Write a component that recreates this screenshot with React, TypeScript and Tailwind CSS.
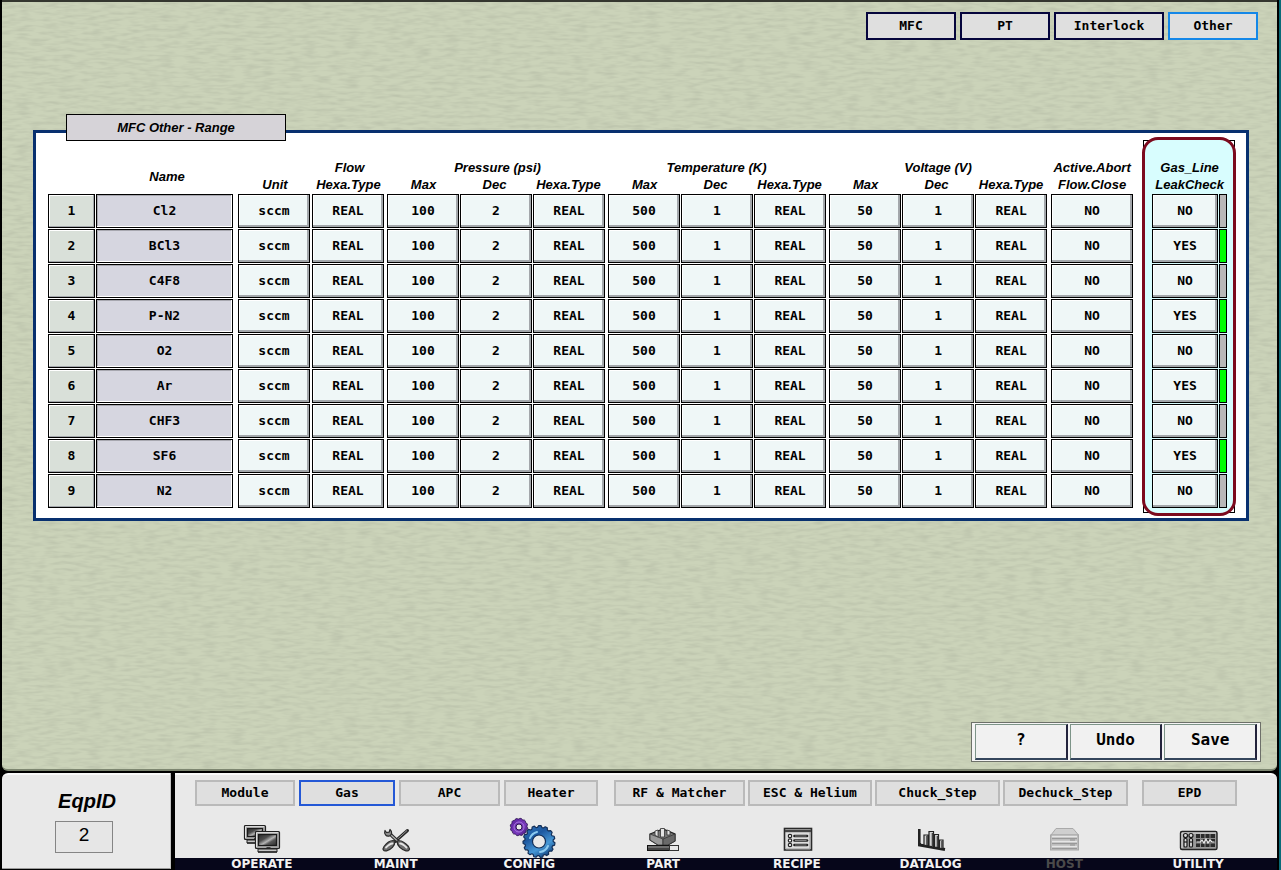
import React from "react";
import type { ReactNode } from "react";

const MONO = "font-['DejaVu_Sans_Mono','Liberation_Mono',monospace] text-[13px] font-bold leading-4";
const HEAD = "p-0 font-['Liberation_Sans',Arial,sans-serif] text-[13px] font-bold italic leading-[17px]";

const CELL =
  "block h-[34px] w-full border border-black bg-[#eff7f7] text-center shadow-[inset_-2px_-2px_0_#a3a7ab,inset_1px_1px_0_#ffffff]";

const gases = ["Cl2", "BCl3", "C4F8", "P-N2", "O2", "Ar", "CHF3", "SF6", "N2"];
const leakCheck = [false, true, false, true, false, true, false, true, false];

const fields = [
  { label: "Unit", value: "sccm", pad: "pr-0.5" },
  { label: "Flow Hexa.Type", value: "REAL", pad: "pr-[3px]" },
  { label: "Pressure Max", value: "100", pad: "pr-px" },
  { label: "Pressure Dec", value: "2", pad: "pr-px" },
  { label: "Pressure Hexa.Type", value: "REAL", pad: "pr-[3px]" },
  { label: "Temperature Max", value: "500", pad: "pr-px" },
  { label: "Temperature Dec", value: "1", pad: "pr-px" },
  { label: "Temperature Hexa.Type", value: "REAL", pad: "pr-[3px]" },
  { label: "Voltage Max", value: "50", pad: "pr-px" },
  { label: "Voltage Dec", value: "1", pad: "pr-px" },
  { label: "Voltage Hexa.Type", value: "REAL", pad: "pr-1" },
  { label: "Active.Abort Flow.Close", value: "NO", pad: "pr-0" },
];

function Texture() {
  return (
    <svg className="pointer-events-none absolute inset-0 h-full w-full" aria-hidden="true">
      <filter id="weave" x="0" y="0" width="100%" height="100%">
        <feTurbulence type="fractalNoise" baseFrequency="0.07 0.3" numOctaves={2} seed={11} />
        <feColorMatrix values="0 0 0 0 0.46  0 0 0 0 0.5  0 0 0 0 0.38  1.3 0 0 0 -0.5" />
      </filter>
      <rect width="100%" height="100%" filter="url(#weave)" />
    </svg>
  );
}

function SubPages() {
  const pages = [
    { name: "MFC", width: "w-[90px]" },
    { name: "PT", width: "w-[90px]" },
    { name: "Interlock", width: "w-[110px]" },
    { name: "Other", width: "w-[90px]" },
  ];
  return (
    <nav className="flex justify-end gap-1 pr-[19px]">
      {pages.map((p) => (
        <button
          key={p.name}
          type="button"
          className={`${MONO} ${p.width} h-7 border-2 bg-[#dfdfdf] ${p.name === "Other" ? "border-[#1487e8]" : "border-[#05053c]"}`}
        >
          {p.name}
        </button>
      ))}
    </nav>
  );
}

function RangeTable() {
  return (
    <table className="mt-[22px] w-0 flex-1 table-fixed border-separate border-spacing-0 self-start">
      <colgroup>
        <col className="w-[48px]" />
        <col className="w-[142px]" />
        <col className="w-[74px]" />
        <col className="w-[75px]" />
        <col className="w-[73px]" />
        <col className="w-[73px]" />
        <col className="w-[75px]" />
        <col className="w-[73px]" />
        <col className="w-[73px]" />
        <col className="w-[75px]" />
        <col className="w-[73px]" />
        <col className="w-[73px]" />
        <col className="w-[76px]" />
        <col className="w-[82px]" />
      </colgroup>
      <thead>
        <tr className="h-[17px]">
          <td rowSpan={2} className="p-0" />
          <th rowSpan={2} className={`${HEAD} align-middle`}>Name</th>
          <td className="p-0" />
          <th className={HEAD}>Flow</th>
          <th colSpan={3} className={HEAD}>Pressure (psi)</th>
          <th colSpan={3} className={`${HEAD} pr-1`}>Temperature (K)</th>
          <th colSpan={3} className={`${HEAD} pr-1`}>Voltage (V)</th>
          <th rowSpan={2} className={`${HEAD} align-top`}>
            Active.Abort
            <br />
            Flow.Close
          </th>
        </tr>
        <tr className="h-[18px] align-top">
          <th className={HEAD}>Unit</th>
          <th className={`${HEAD} pr-0.5`}>Hexa.Type</th>
          {["p", "t", "v"].map((g) => (
            <React.Fragment key={g}>
              <th className={HEAD}>Max</th>
              <th className={`${HEAD} pr-1`}>Dec</th>
              <th className={`${HEAD} pr-1`}>Hexa.Type</th>
            </React.Fragment>
          ))}
        </tr>
      </thead>
      <tbody className={MONO}>
        {gases.map((gas, i) => (
          <tr key={gas} className="h-[35px] align-top">
            <td className="p-0 pr-px">
              <div className="flex h-[34px] items-center justify-center border border-black bg-[#d9e0d9] shadow-[inset_-1px_-1px_0_#a3a7ab,inset_1px_1px_0_#ffffff]">
                {i + 1}
              </div>
            </td>
            <th scope="row" className="p-0 pr-[5px]">
              <div className="flex h-[34px] items-center justify-center border border-black bg-[#d6d6e0] shadow-[inset_-1px_-1px_0_#ffffff,inset_1px_1px_0_#a8a8b0]">
                {gas}
              </div>
            </th>
            {fields.map((f) => (
              <td key={f.label} className={`p-0 ${f.pad}`}>
                <button type="button" aria-label={`${gas} ${f.label}: ${f.value}`} className={CELL}>
                  {f.value}
                </button>
              </td>
            ))}
          </tr>
        ))}
      </tbody>
    </table>
  );
}

function LeakCheckPanel() {
  return (
    <div className="relative w-[94px] shrink-0">
      <div className="absolute inset-x-px top-[3px] bottom-[3px] border border-black" />
      <div className="relative rounded-[16px] border-[3px] border-[#7c0a1e] bg-[#d8fdfe] pt-[19px] pr-1.5 pb-1 pl-[7px]">
        <table className="w-full table-fixed border-separate border-spacing-0">
          <colgroup>
            <col className="w-[67px]" />
            <col className="w-2" />
          </colgroup>
          <thead>
            <tr className="h-[35px] align-top">
              <th colSpan={2} className={HEAD}>
                Gas_Line
                <br />
                LeakCheck
              </th>
            </tr>
          </thead>
          <tbody className={MONO}>
            {leakCheck.map((on, i) => (
              <tr key={gases[i]} className="h-[35px] align-top">
                <td className="p-0 pr-px">
                  <button type="button" aria-label={`${gases[i]} leak check: ${on ? "YES" : "NO"}`} className={CELL}>
                    {on ? "YES" : "NO"}
                  </button>
                </td>
                <td className="p-0">
                  <div className={`h-[34px] border border-black ${on ? "bg-[#00fc00]" : "bg-[#b8b8b8]"}`} />
                </td>
              </tr>
            ))}
          </tbody>
        </table>
      </div>
    </div>
  );
}

function Actions() {
  return (
    <div className="mr-4 mb-[7px] flex w-[290px] gap-0.5 self-end border border-[#6d7069] bg-[#f4f4f4] py-px pr-[3px] pl-[3px]">
      {["?", "Undo", "Save"].map((a) => (
        <button
          key={a}
          type="button"
          className="h-9 flex-1 border border-r-2 border-b-2 border-t-[#7d9488] border-r-[#23233c] border-b-[#34455c] border-l-[#7d9488] bg-[#f1f1f1] pb-1 font-['DejaVu_Sans_Mono',monospace] text-[16px] leading-6 font-bold"
        >
          {a}
        </button>
      ))}
    </div>
  );
}

function gearPath(cx: number, cy: number, outer: number, inner: number, teeth: number) {
  const pts: string[] = [];
  for (let i = 0; i < teeth; i++) {
    [0, 0.2, 0.55, 0.75].forEach((f, k) => {
      const a = ((i + f) / teeth) * Math.PI * 2;
      const r = k === 1 || k === 2 ? outer : inner;
      pts.push(`${(cx + r * Math.cos(a)).toFixed(2)} ${(cy + r * Math.sin(a)).toFixed(2)}`);
    });
  }
  return `M${pts.join("L")}Z`;
}

function Icon({ children }: { children: ReactNode }) {
  return (
    <svg viewBox="0 0 48 40" className="h-10 w-12 overflow-visible" aria-hidden="true">
      {children}
    </svg>
  );
}

function Monitor({ x, y, w, h }: { x: number; y: number; w: number; h: number }) {
  return (
    <g transform={`translate(${x} ${y})`}>
      <path d={`M3 ${h - 3}H${w - 3}V${h}H3Z`} fill="#c4c4c4" stroke="#222" strokeWidth="1" />
      <rect x="0.5" y="0.5" width={w - 1} height={h - 4} rx="1" fill="#a6a6a6" stroke="#222" strokeWidth="1.2" />
      <path d={`M1.5 ${h - 5}V1.7H${w - 2}`} fill="none" stroke="#f3f3f3" strokeWidth="0.8" />
      <rect x="3.5" y="3.5" width={w - 7} height={h - 10} fill="url(#screen)" stroke="#1a1a1a" strokeWidth="1.2" />
      <path d={`M${w / 2 - 1} ${h - 4}h4`} stroke="#222" strokeWidth="1.6" />
      <path d={`M3 ${h}H${w - 3}`} stroke="#222" strokeWidth="1.4" />
    </g>
  );
}

function OperateIcon() {
  return (
    <Icon>
      <defs>
        <linearGradient id="screen" x1="0" y1="0" x2="1" y2="1">
          <stop offset="0" stopColor="#2b2b2b" />
          <stop offset="0.35" stopColor="#4d4d4d" />
          <stop offset="0.55" stopColor="#b4b4b4" />
          <stop offset="0.68" stopColor="#585858" />
          <stop offset="1" stopColor="#2b2b2b" />
        </linearGradient>
      </defs>
      <Monitor x={6} y={7} w={22} h={18} />
      <Monitor x={17} y={13} w={25} h={21} />
    </Icon>
  );
}

function MaintIcon() {
  return (
    <Icon>
      <path d="M35.5 12.500 23 23.500" stroke="#2a2a2a" strokeWidth="3" strokeLinecap="round" />
      <path d="M35 12.500 24 22.500" stroke="#aaa" strokeWidth="0.8" />
      <path d="M17 15 27 24.500" stroke="#2a2a2a" strokeWidth="3.4" />
      <path d="M18 16 27 24.500" stroke="#b5b5b5" strokeWidth="1.1" />
      <path d="M13 12.500c-1.300 3.500 1.200 6.500 4.500 5.500 2.500-1 3-4.500.5-6.500l-.8 2.700-2.700.3Z" fill="#8d8d8d" stroke="#2a2a2a" strokeWidth="1.2" strokeLinejoin="round" />
      <path d="M23 23c-3.500-1-8 1.500-11 5.500-2 3-.5 5 2.500 4.300 4.500-1 8.500-4.800 8.500-9.800Z" fill="#6e6e6e" stroke="#2a2a2a" strokeWidth="1.2" />
      <path d="M25 23c3.500-1 8 1.500 11.500 5.500 2 3 .5 5-2.500 4.300-4.500-1-9-4.800-9-9.800Z" fill="#6e6e6e" stroke="#2a2a2a" strokeWidth="1.2" />
      <path d="M20.500 25.500c-2.500 0-4.500 2-6.500 4M28 25.500c2.500 0 4.500 2 6.500 4" fill="none" stroke="#e4e4e4" strokeWidth="1.8" strokeLinecap="round" />
    </Icon>
  );
}

function ConfigIcon() {
  return (
    <Icon>
      <defs>
        <linearGradient id="blue" x1="0" y1="0" x2="0.6" y2="1">
          <stop offset="0" stopColor="#2f78bd" />
          <stop offset="0.4" stopColor="#1d58a0" />
          <stop offset="0.75" stopColor="#4698d6" />
          <stop offset="1" stopColor="#184d8b" />
        </linearGradient>
        <linearGradient id="violet" x1="0" y1="0" x2="1" y2="1">
          <stop offset="0" stopColor="#5a1f9e" />
          <stop offset="0.6" stopColor="#7a3abd" />
          <stop offset="1" stopColor="#3d1173" />
        </linearGradient>
      </defs>
      <path d={gearPath(14, 9, 8.8, 8, 12)} fill="url(#violet)" stroke="#2c1450" strokeWidth="0.8" strokeLinejoin="round" />
      <circle cx="14" cy="9" r="5" fill="none" stroke="#a878de" strokeWidth="1" />
      <circle cx="14" cy="9" r="3" fill="#e9e9e9" stroke="#2c1450" />
      <path d={gearPath(34, 23.500, 16, 14.200, 15)} fill="url(#blue)" stroke="#132f58" strokeWidth="1.2" strokeLinejoin="round" />
      <path d="M25 20a10 10 0 0 1 7-6M43 28a10 10 0 0 1-8 6" fill="none" stroke="#8ccaf0" strokeWidth="2" strokeLinecap="round" />
      <circle cx="34" cy="23.500" r="6.500" fill="#e9e9e9" stroke="#132f58" strokeWidth="1.2" />
    </Icon>
  );
}

function PartIcon() {
  return (
    <Icon>
      <path d="M11 16 24 11 36 16V23L29 27H19L11 22Z" fill="#777" stroke="#222" strokeWidth="1.2" />
      <path d="M11 16 24 21V27H19L11 22Z" fill="#999" stroke="#333" strokeWidth="0.8" />
      <path d="M24 21 36 16V23L29 27H24Z" fill="#696969" stroke="#333" strokeWidth="0.8" />
      <path d="M16 17v-4l3-1v7ZM21.500 19v-8.500h4V19ZM28 17v-5l3 1v4Z" fill="#e4e4e4" stroke="#333" strokeWidth="0.8" />
      <rect x="8.5" y="27.500" width="22" height="5" fill="#444" stroke="#111" />
      <path d="M9 29H30" stroke="#999" />
      <rect x="30.5" y="27.500" width="9" height="5" fill="#e8e8e8" stroke="#333" />
    </Icon>
  );
}

function RecipeIcon() {
  return (
    <Icon>
      <rect x="11.5" y="10.500" width="27" height="21.500" fill="#dcdcdc" stroke="#2a2a2a" strokeWidth="1.6" />
      <path d="M12 13H38" stroke="#444" strokeWidth="2.4" />
      <path d="M13 31H37V14" fill="none" stroke="#999" />
      {[18, 22.5, 27].map((y) => (
        <g key={y}>
          <circle cx="17" cy={y} r="1.700" fill="#fff" stroke="#222" strokeWidth="1.2" />
          <path d={`M21.500 ${y}H34`} stroke="#222" strokeWidth="2.6" strokeLinecap="round" />
          <path d={`M22 ${y}H33.500`} stroke="#aaa" strokeWidth="0.7" />
        </g>
      ))}
    </Icon>
  );
}

function DatalogIcon() {
  return (
    <Icon>
      <path d="M12.500 11V27L38 31.500" fill="none" stroke="#222" strokeWidth="3" />
      <path d="M13.500 11V25" stroke="#888" strokeWidth="0.8" />
      <path d="M17 27V17h4v11ZM22 28V13.500h4.500v15.500ZM27.500 29V16.500h4v13ZM32.500 30v-8h3.500v9Z" fill="#d4d4d4" stroke="#222" strokeWidth="1.2" />
      <path d="M20 18v9M25.500 15v13M30.500 18v11M35 23v7" stroke="#444" strokeWidth="1.6" />
    </Icon>
  );
}

function HostIcon() {
  return (
    <Icon>
      <path d="M11 17 16 10.500H33L38.500 17Z" fill="#cfcfcf" stroke="#aaa" />
      <rect x="10.500" y="17" width="28" height="15" fill="#bdbdbd" stroke="#a8a8a8" />
      <path d="M12 18.500H37M12 23.500H37M12 28.500H37" stroke="#e6e6e6" strokeWidth="1.6" />
      <path d="M12 20.500H37M12 25.500H37M12 30.500H37" stroke="#999" strokeWidth="1" />
      <path d="M30 22h5M30 27h5" stroke="#8f8f8f" />
    </Icon>
  );
}

function UtilityIcon() {
  return (
    <Icon>
      <rect x="6.5" y="13.500" width="36.500" height="18" rx="1.5" fill="#999" stroke="#222" strokeWidth="1.4" />
      <path d="M8 30V15H42" fill="none" stroke="#e4e4e4" />
      {[11.5, 17].map((x) => (
        <g key={x} stroke="#1a1a1a" strokeWidth="1.2">
          <rect x={x - 1.5} y="20.500" width="3" height="8.500" rx="1" fill="#ddd" />
          <circle cx={x} cy="17.500" r="2" fill="#ddd" />
          <path d={`M${x - 1.5} 24h3`} />
        </g>
      ))}
      <rect x="22" y="16" width="19" height="13" fill="#2b2b2b" />
      <path d="M22 20.500H41M22 25H41M26.500 16V29M31 16V29M36 16V29" stroke="#8a8a8a" strokeWidth="1" />
      <path d="M22.500 24h4l1.500-2 2 3 2-4 2 4 2-3 2 2h2.500" fill="none" stroke="#f1f1f1" strokeWidth="1.2" />
    </Icon>
  );
}

const sections = [
  { name: "Module", basis: "basis-[100px]", gap: "" },
  { name: "Gas", basis: "basis-[96px]", gap: "ml-1" },
  { name: "APC", basis: "basis-[101px]", gap: "ml-1" },
  { name: "Heater", basis: "basis-[94px]", gap: "ml-1" },
  { name: "RF & Matcher", basis: "basis-[131px]", gap: "ml-4" },
  { name: "ESC & Helium", basis: "basis-[124px]", gap: "ml-[3px]" },
  { name: "Chuck_Step", basis: "basis-[125px]", gap: "ml-[3px]" },
  { name: "Dechuck_Step", basis: "basis-[125px]", gap: "ml-[3px]" },
  { name: "EPD", basis: "basis-[95px]", gap: "ml-3.5" },
];

const modes = [
  { name: "OPERATE", icon: <OperateIcon /> },
  { name: "MAINT", icon: <MaintIcon /> },
  { name: "CONFIG", icon: <ConfigIcon /> },
  { name: "PART", icon: <PartIcon /> },
  { name: "RECIPE", icon: <RecipeIcon /> },
  { name: "DATALOG", icon: <DatalogIcon /> },
  { name: "HOST", icon: <HostIcon /> },
  { name: "UTILITY", icon: <UtilityIcon /> },
];

function Footer() {
  return (
    <footer className="flex shrink-0 gap-1">
      <div className="mb-px flex w-[169px] shrink-0 flex-col items-center rounded-tl-md border-t-2 border-r border-b border-t-[#fafafa] border-r-[#c4c4c4] border-b-[#9a9a9a] bg-[#e9e9e9] pt-3.5 pl-0.5">
        <label
          htmlFor="eqp-id"
          className="font-['Liberation_Sans',Arial,sans-serif] text-[20px] leading-6 font-bold italic"
        >
          EqpID
        </label>
        <input
          id="eqp-id"
          readOnly
          value="2"
          className="mt-2 mr-1.5 h-8 w-[58px] border border-[#858585] bg-[#e6e6e6] pb-1 text-center font-['Liberation_Sans',Arial,sans-serif] text-[19px]"
        />
      </div>
      <div className="min-w-0 flex-1 rounded-tr-md border-t-2 border-[#fafafa] bg-[linear-gradient(to_top,#06061a_12px,#e9e9e9_12px)]">
        <nav className="flex pt-[5px] pr-10 pl-5">
          {sections.map((s) => (
            <button
              key={s.name}
              type="button"
              className={`${MONO} ${s.basis} ${s.gap} h-[26px] grow whitespace-nowrap border-2 bg-[#dfdfdf] ${s.name === "Gas" ? "border-[#2458d6]" : "border-[#bababa]"}`}
            >
              {s.name}
            </button>
          ))}
        </nav>
        <nav className="grid grid-cols-8 pt-3 pr-3 pl-5">
          {modes.map((m) => (
            <a key={m.name} href={`#${m.name.toLowerCase()}`} className="flex flex-col items-center">
              {m.icon}
              <span
                className={`h-3 font-['DejaVu_Sans',sans-serif] text-[12px] leading-3 font-bold ${m.name === "HOST" ? "text-[#4a4a4a]" : "text-[#f2f2f2]"}`}
              >
                {m.name}
              </span>
            </a>
          ))}
        </nav>
      </div>
    </footer>
  );
}

export default function App() {
  return (
    <div className="flex min-h-screen flex-col gap-0.5 border-r-2 border-[#0a6a78] bg-black pr-0.5 pl-0.5 text-black">
      <main className="relative flex flex-1 flex-col overflow-hidden rounded-b-md border-t-2 border-b-2 border-t-[#34362f] border-b-[#7d8670] bg-[#cbd3b9] pt-2.5">
        <Texture />
        <div className="relative flex flex-1 flex-col">
          <SubPages />
          <section className="mt-[74px] mr-7 ml-[31px]">
            <h2 className={`${HEAD} relative z-10 ml-[33px] flex h-[27px] w-[220px] items-center justify-center border border-black bg-[#d6d3d8]`}>
              MFC Other - Range
            </h2>
            <div className="-mt-[11px] flex gap-[9px] border-[3px] border-[#08306f] bg-white pt-1 pr-2.5 pb-0.5 pl-3">
              <RangeTable />
              <LeakCheckPanel />
            </div>
          </section>
          <div className="min-h-10 flex-1" />
          <Actions />
        </div>
      </main>
      <Footer />
    </div>
  );
}
